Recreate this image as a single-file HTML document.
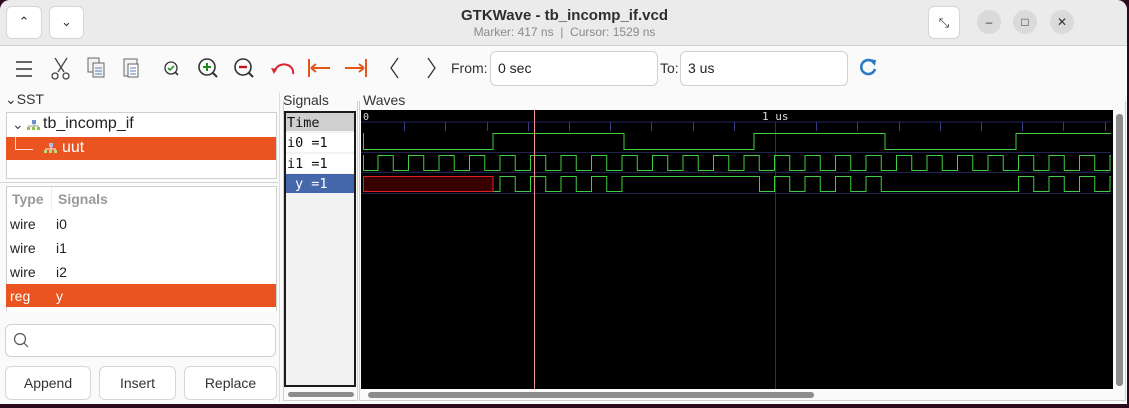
<!DOCTYPE html>
<html><head><meta charset="utf-8"><style>
*{box-sizing:border-box;margin:0;padding:0}
body{width:1129px;height:408px;overflow:hidden;background:#2b0a20;font-family:"Liberation Sans","DejaVu Sans",sans-serif;position:relative}
.a{position:absolute}
#win{left:0;top:0;width:1127px;height:404px;background:#fafafa;border-radius:10px 10px 0 0;overflow:hidden}
#title{left:0;top:0;width:1127px;height:46px;background:#ebebeb;border-bottom:1px solid #d0d0d0}
.btn{background:#fff;border:1px solid #d6d6d6;border-radius:6px}
.circ{width:24px;height:24px;border-radius:12px;background:#dadada;text-align:center;font-size:12px;line-height:24px;color:#333}
.ent{background:#fff;border:1px solid #d0d0d0;border-radius:6px;font-size:14px;color:#222;padding:8px 7px}
.box{background:#fff;border:1px solid #cfcfcf}
.t{font-size:14px;color:#222;white-space:nowrap}
.mono{font-family:"DejaVu Sans Mono","Liberation Mono",monospace;font-size:13.5px;color:#111}
</style></head><body>
<div id="win" class="a">
<div id="title" class="a"></div>
<div class="a btn" style="left:6px;top:6px;width:36px;height:33px;text-align:center;line-height:30px;font-size:13px;color:#333">&#8963;</div>
<div class="a btn" style="left:49px;top:6px;width:35px;height:33px;text-align:center;line-height:30px;font-size:13px;color:#333">&#8964;</div>
<div class="a" style="left:0;width:1129px;top:7px;text-align:center;font-weight:bold;font-size:15px;color:#2e2e2e">GTKWave - tb_incomp_if.vcd</div>
<div class="a" style="left:0;width:1129px;top:25px;text-align:center;font-size:12px;color:#8a8a8a">Marker: 417 ns &nbsp;|&nbsp; Cursor: 1529 ns</div>
<div class="a btn" style="left:928px;top:6px;width:32px;height:33px;text-align:center;line-height:32px;font-size:13px;color:#333">&#10529;</div>
<div class="a circ" style="left:977px;top:10px">&#8211;</div>
<div class="a circ" style="left:1013px;top:10px">&#9633;</div>
<div class="a circ" style="left:1050px;top:10px">&#10005;</div>

<svg class="a" style="left:0;top:46px" width="900" height="46">
<g stroke="#333" stroke-width="1.6" fill="none">
<path d="M16 16h16M16 23h16M16 30h16"/>
</g>
<g stroke="#444" fill="none" stroke-width="1.3"><path d="M55 12l9 14M67 12l-9 14"/><circle cx="55" cy="30" r="3"/><circle cx="66" cy="30" r="3"/></g>
<g stroke="#666" fill="#f3f3f3" stroke-width="1"><rect x="88" y="12" width="11" height="14"/><rect x="93" y="17" width="11" height="14"/><path d="M95 22h7M95 25h7M95 28h7" stroke="#5a7fbf"/></g>
<g stroke="#666" fill="#f3f3f3" stroke-width="1"><rect x="124" y="13" width="13" height="17"/><rect x="128" y="18" width="10" height="13" fill="#fff"/><path d="M130 22h6M130 25h6M130 28h6" stroke="#5a7fbf"/></g>
<g fill="none"><circle cx="171" cy="22" r="6" stroke="#333" stroke-width="1.3"/><path d="M168 22l2 2 4-4" stroke="#2a9a2a" stroke-width="1.6"/><path d="M175 26l3 3" stroke="#333" stroke-width="1.6"/></g>
<g fill="none"><circle cx="207" cy="21" r="8" stroke="#333" stroke-width="1.6"/><path d="M203 21h8M207 17v8" stroke="#1d8a1d" stroke-width="2"/><path d="M213 27l4 4" stroke="#333" stroke-width="2"/></g>
<g fill="none"><circle cx="243" cy="21" r="8" stroke="#333" stroke-width="1.6"/><path d="M239 21h8" stroke="#c0141b" stroke-width="2.4"/><path d="M249 27l4 4" stroke="#333" stroke-width="2"/></g>
<path d="M275 25a9 8 0 0 1 18 3" stroke="#d8262b" stroke-width="2" fill="none"/><path d="M271 22l6 1-3 5z" fill="#d8262b"/>
<g stroke="#e2561c" stroke-width="2" fill="none"><path d="M309 13v18M311 22h19M311 22l5-4M311 22l5 4"/><path d="M366 13v18M345 22h19M364 22l-5-4M364 22l-5 4"/></g>
<g stroke="#333" stroke-width="1.3" fill="none"><path d="M398 12l-7 10 7 10M428 12l7 10-7 10"/></g>
<path d="M874 17a7 7 0 1 0 1 6" stroke="#2a7ac6" stroke-width="2.6" fill="none"/><path d="M869 13l7 1-1 6z" fill="#2a7ac6"/>
</svg>
<div class="a t" style="left:451px;top:60px;color:#333">From:</div>
<div class="a ent" style="left:490px;top:51px;width:168px;height:35px">0 sec</div>
<div class="a t" style="left:660px;top:60px;color:#333">To:</div>
<div class="a ent" style="left:680px;top:51px;width:168px;height:35px">3 us</div>

<div class="a t" style="left:5px;top:91px;font-size:14px;color:#333">&#8964;SST</div>
<div class="a box" style="left:6px;top:112px;width:271px;height:67px"></div>
<div class="a t" style="left:12px;top:116px;color:#444">&#8964;</div>
<svg class="a" style="left:26px;top:118px" width="16" height="14"><rect x="6" y="2" width="4" height="4" fill="#6a8fd0"/><rect x="1" y="9" width="3" height="3" fill="#8bc34a"/><rect x="6" y="9" width="3" height="3" fill="#8bc34a"/><rect x="11" y="9" width="3" height="3" fill="#8bc34a"/><path d="M2 8h11M8 6v2" stroke="#999"/></svg>
<div class="a t" style="left:43px;top:115px;font-size:16px;color:#222">tb_incomp_if</div>
<div class="a" style="left:6px;top:137px;width:270px;height:23px;background:#e95420"></div>
<div class="a" style="left:15px;top:137px;width:18px;height:13px;border-left:1px solid #fff;border-bottom:1px solid #fff;opacity:.8"></div>
<svg class="a" style="left:43px;top:141px" width="16" height="14"><rect x="6" y="2" width="4" height="4" fill="#a9c2ee"/><rect x="1" y="9" width="3" height="3" fill="#b5e07a"/><rect x="6" y="9" width="3" height="3" fill="#b5e07a"/><rect x="11" y="9" width="3" height="3" fill="#b5e07a"/><path d="M2 8h11M8 6v2" stroke="#fff"/></svg>
<div class="a t" style="left:62px;top:139px;font-size:16px;color:#fff">uut</div>
<div class="a" style="left:0;top:182px;width:278px;height:1px;background:#d4d4d4"></div>
<div class="a box" style="left:6px;top:186px;width:271px;height:125px;border-bottom:none"></div>
<div class="a t" style="left:12px;top:191px;color:#999;font-weight:bold">Type</div>
<div class="a" style="left:51px;top:187px;width:1px;height:23px;background:#eee"></div>
<div class="a t" style="left:58px;top:191px;color:#999;font-weight:bold">Signals</div>
<div class="a t" style="left:10px;top:216px">wire</div><div class="a t" style="left:56px;top:216px">i0</div>
<div class="a t" style="left:10px;top:240px">wire</div><div class="a t" style="left:56px;top:240px">i1</div>
<div class="a t" style="left:10px;top:264px">wire</div><div class="a t" style="left:56px;top:264px">i2</div>
<div class="a" style="left:6px;top:284px;width:270px;height:23px;background:#e95420"></div>
<div class="a t" style="left:10px;top:288px;color:#fff">reg</div><div class="a t" style="left:56px;top:288px;color:#fff">y</div>
<div class="a" style="left:5px;top:324px;width:271px;height:33px;background:#fff;border:1px solid #d0d0d0;border-radius:6px"></div>
<svg class="a" style="left:12px;top:331px" width="18" height="18"><circle cx="8" cy="8" r="5.5" stroke="#555" stroke-width="1.2" fill="none"/><path d="M12 12l4 4" stroke="#555" stroke-width="1.2"/></svg>
<div class="a btn" style="left:5px;top:366px;width:86px;height:34px;text-align:center;line-height:32px;font-size:14px;color:#333">Append</div>
<div class="a btn" style="left:99px;top:366px;width:77px;height:34px;text-align:center;line-height:32px;font-size:14px;color:#333">Insert</div>
<div class="a btn" style="left:184px;top:366px;width:93px;height:34px;text-align:center;line-height:32px;font-size:14px;color:#333">Replace</div>

<div class="a" style="left:279px;top:92px;width:1px;height:310px;background:#ddd"></div>
<div class="a t" style="left:283px;top:92px;color:#333">Signals</div>
<div class="a" style="left:283px;top:101px;width:75px;height:300px;border:1px solid #d0d0d0;border-top:none"></div>
<div class="a" style="left:284px;top:111px;width:72px;height:276px;background:#f2f2f2;border:2px solid #1a1a1a"></div>
<div class="a" style="left:286px;top:113px;width:68px;height:18px;background:#cfcfcf"></div>
<div class="a mono" style="left:287px;top:115px">Time</div>
<div class="a" style="left:286px;top:133px;width:68px;height:19px;background:#fff"></div>
<div class="a mono" style="left:287px;top:135px">i0 =1</div>
<div class="a" style="left:286px;top:154px;width:68px;height:19px;background:#fff"></div>
<div class="a mono" style="left:287px;top:156px">i1 =1</div>
<div class="a" style="left:286px;top:174px;width:68px;height:19px;background:#4667ac"></div>
<div class="a mono" style="left:295px;top:176px;color:#fff">y =1</div>
<div class="a" style="left:288px;top:392px;width:66px;height:5px;background:#8c8c8c;border-radius:3px"></div>

<div class="a t" style="left:363px;top:92px;color:#333">Waves</div>
<div class="a" style="left:359px;top:101px;width:767px;height:300px;border:1px solid #d0d0d0;border-top:none"></div>
<div class="a" style="left:361px;top:110px;width:752px;height:279px;background:#000"></div>
<div class="a" style="left:1116px;top:114px;width:7px;height:272px;background:#8c8c8c;border-radius:3px"></div>
<div class="a" style="left:368px;top:392px;width:446px;height:6px;background:#8c8c8c;border-radius:3px"></div>
<svg id="w" class="a" style="left:0;top:0" width="1129" height="408"></svg>
</div>
<script>
var s='';
var L=363,R=1111;
s+='<line x1="361" y1="122" x2="1111" y2="122" stroke="#23235a"/>';
for(var k=1;k<19;k++){var x=Math.round(L+41.2*k)+.5;if(x<R)s+='<line x1="'+x+'" y1="122" x2="'+x+'" y2="131" stroke="#3a3a8a"/>';}
[152.5,172.5,193.5].forEach(function(y){s+='<line x1="361" y1="'+y+'" x2="1111" y2="'+y+'" stroke="#22224e"/>';});
s+='<line x1="775.5" y1="122" x2="775.5" y2="389" stroke="#2a2a78"/>';
s+='<text x="363" y="120" fill="#ddd" font-family="DejaVu Sans Mono" font-size="10">0</text>';
s+='<text x="762" y="120" fill="#ddd" font-family="DejaVu Sans Mono" font-size="11">1 us</text>';
function wave(ev,hi,lo,init){var v=init,d='M'+L+' '+(v?hi:lo);ev.forEach(function(e){d+=' H'+e+' V'+(v?lo:hi);v=!v;});d+=' H'+R;return '<path d="'+d+'" stroke="#3fce3f" stroke-width="1" fill="none"/>';}
var i1=[];for(var k=0;k<50;k++){var r=378+30.5*k;if(r>R)break;i1.push(r);if(r+15.25<R)i1.push(r+15.25);}
s+=wave([493,624,754,885,1016],133.5,149.5,0);
s+=wave(i1,155.5,170.5,0);
var ev=[];
i1.forEach(function(e){if(e>493&&e<624)ev.push(e);});
var st=(ev.length%2==1);var ev2=ev.slice();
if(!st)ev2.push(624);
ev2.push(759.5);
i1.forEach(function(e){if(e>760&&e<882)ev2.push(e);});
i1.forEach(function(e){if(e>1016)ev2.push(e);});
var d='M493 191.5';var v=0;ev2.forEach(function(e){d+=' H'+e+' V'+(v?191.5:176.5);v=!v;});d+=' H'+R;
s+='<path d="'+d+'" stroke="#3fce3f" fill="none"/>';
s+='<rect x="363.5" y="176.5" width="129.5" height="15" fill="#3a0000" stroke="#e02020"/>';
s+='<line x1="363.5" y1="133" x2="363.5" y2="150" stroke="#3fce3f"/><line x1="363.5" y1="155" x2="363.5" y2="171" stroke="#3fce3f"/>';
s+='<line x1="534.5" y1="110" x2="534.5" y2="389" stroke="#f09090"/>';
document.getElementById('w').innerHTML=s;
</script>
</body></html>
